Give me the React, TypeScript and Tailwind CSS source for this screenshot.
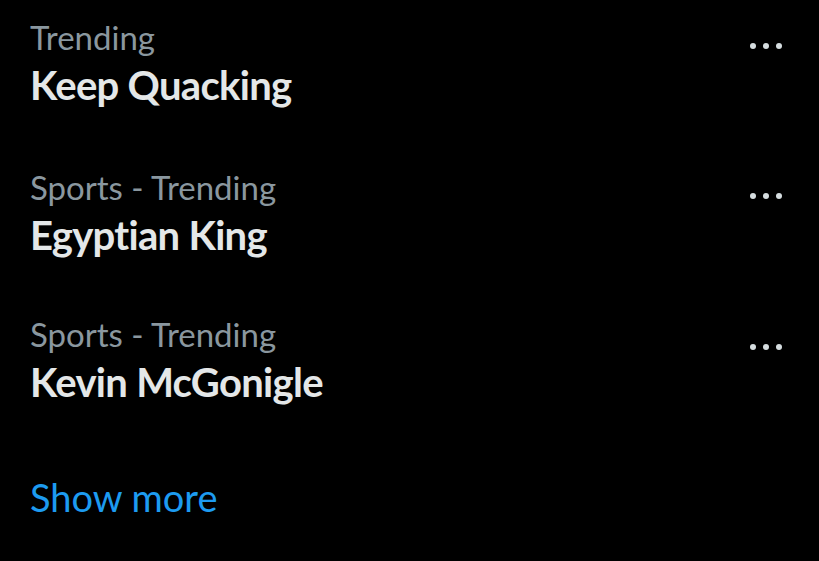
const trends = [
  { category: 'Trending', name: 'Keep Quacking', dotsTop: 'pt-[26px]' },
  { category: 'Sports - Trending', name: 'Egyptian King', dotsTop: 'pt-[26px]' },
  { category: 'Sports - Trending', name: 'Kevin McGonigle', dotsTop: 'pt-[30px]' },
]

function Dots({ top }: { top: string }) {
  return (
    <div className={`flex items-center gap-[7px] ${top}`}>
      <span className="h-[6px] w-[6px] rounded-full bg-[#d6dde0]" />
      <span className="h-[6px] w-[6px] rounded-full bg-[#d6dde0]" />
      <span className="h-[6px] w-[6px] rounded-full bg-[#d6dde0]" />
    </div>
  )
}

export default function App() {
  return (
    <div className="h-[561px] w-[819px] overflow-hidden bg-black font-['Lato',sans-serif]">
      <div className="flex flex-col">
        {trends.map((t, i) => (
          <div
            key={t.name}
            className={`flex items-start justify-between pl-[30px] pr-[37px] ${i === 0 ? 'pt-[17px]' : i === 1 ? 'pt-[58px]' : 'pt-[55px]'}`}
          >
            <div className="flex flex-col">
              <div className="text-[33px] leading-[40px] text-[#8a979f]">{t.category}</div>
              <div className="mt-[4px] text-[40px] font-bold leading-[48px] tracking-[-0.7px] text-[#e4e7e8]">
                {t.name}
              </div>
            </div>
            <Dots top={t.dotsTop} />
          </div>
        ))}
        <div className="mt-[68px] pl-[30px] text-[38px] leading-[46px] text-[#1d9bf0]">
          Show more
        </div>
      </div>
    </div>
  )
}
